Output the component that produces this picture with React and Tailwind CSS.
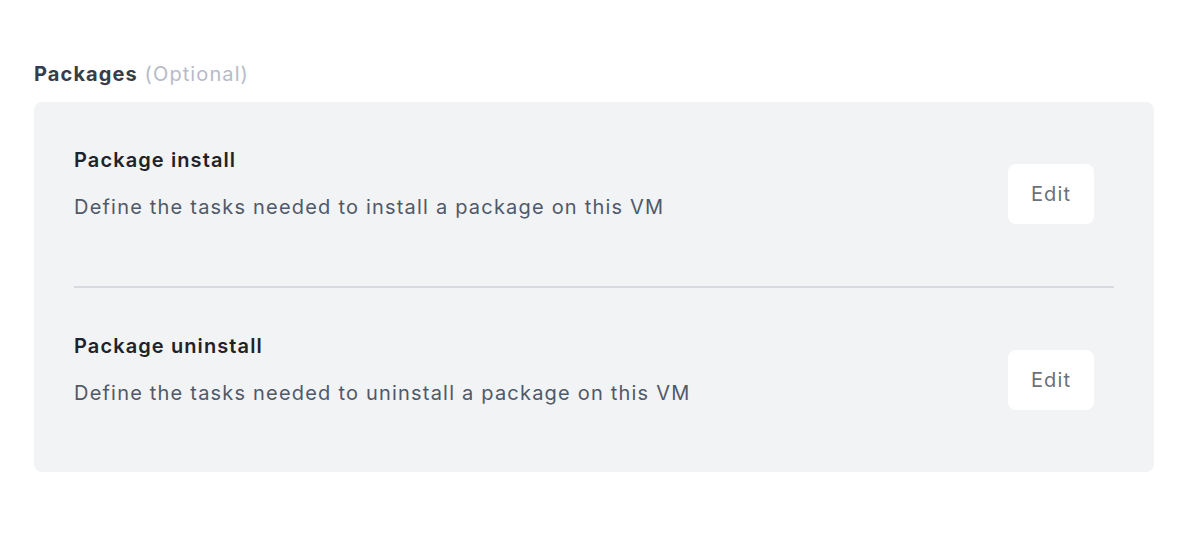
const rows = [
  {
    title: "Package install",
    text: "Define the tasks needed to install a package on this VM",
  },
  {
    title: "Package uninstall",
    text: "Define the tasks needed to uninstall a package on this VM",
  },
];

const App = () => {
  return (
    <div
      className="w-[1188px] h-[544px] bg-white px-[34px] pt-[60px] tracking-[1.1px]"
      style={{ fontFamily: "Inter, 'Liberation Sans', sans-serif" }}
    >
      <div className="h-[28px] leading-[28px] text-[20px] mb-[14px]">
        <span className="font-bold text-[#363d4a]">Packages</span>{" "}
        <span className="text-[#b6bbc7]">(Optional)</span>
      </div>
      <div className="bg-[#f2f3f5] rounded-lg px-10">
        {rows.map((row, i) => (
          <div key={i}>
            {i > 0 && <div className="h-[2px] bg-[#d8dae0]" />}
            <div className="flex justify-between items-start pt-10 pb-[62px]">
              <div>
                <div className="h-9 leading-9 text-[20px] font-semibold text-[#1f2329]">
                  {row.title}
                </div>
                <div className="mt-[15px] h-7 leading-7 text-[20px] text-[#4f5969] tracking-[1.2px]">
                  {row.text}
                </div>
              </div>
              <button className="mt-[22px] mr-5 w-[86px] h-[60px] bg-white rounded-lg text-[20px] text-[#6b7079] tracking-[1.1px]">
                Edit
              </button>
            </div>
          </div>
        ))}
      </div>
    </div>
  );
};

export default App;
